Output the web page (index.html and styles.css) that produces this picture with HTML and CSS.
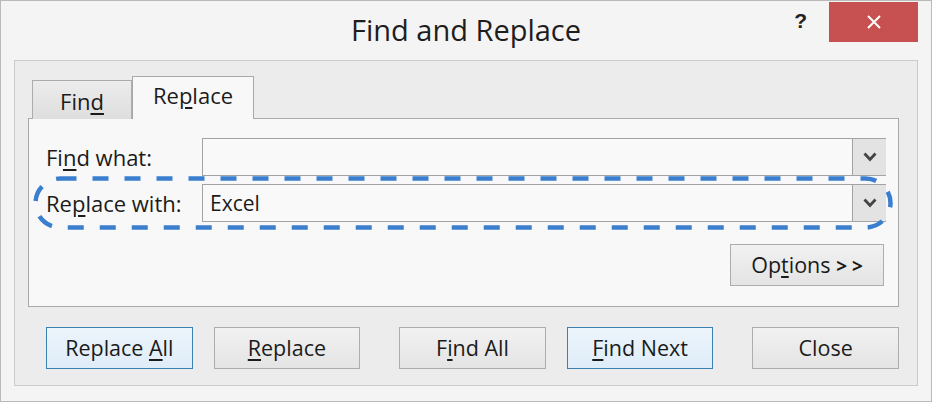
FILE: index.html
```html
<!DOCTYPE html>
<html lang="en">
<head>
<meta charset="utf-8">
<title>Find and Replace</title>
<link rel="stylesheet" href="styles.css">
</head>
<body>
<div class="window">
  <div class="titlebar">
    <div class="title">Find and Replace</div>
    <div class="help">?</div>
    <div class="close">
      <svg width="16" height="16" viewBox="0 0 16 16"><path d="M2 2 L14 14 M14 2 L2 14" stroke="#fff" stroke-width="2" fill="none"/></svg>
    </div>
  </div>
  <div class="panel">
    <div class="tabs">
      <div class="tab"><span>Fin<u>d</u></span></div>
      <div class="tab active"><span>Re<u>p</u>lace</span></div>
    </div>
    <div class="tabbox">
      <div class="row">
        <label class="label">Fi<u>n</u>d what:</label>
        <div class="combo">
          <div class="field"></div>
          <div class="drop"><svg width="14" height="10" viewBox="0 0 14 10"><path d="M1.5 1.5 L7 7.5 L12.5 1.5" stroke="#444" stroke-width="2.8" fill="none"/></svg></div>
        </div>
      </div>
      <div class="row">
        <label class="label">Re<u>p</u>lace with:</label>
        <div class="combo">
          <div class="field">Excel</div>
          <div class="drop"><svg width="14" height="10" viewBox="0 0 14 10"><path d="M1.5 1.5 L7 7.5 L12.5 1.5" stroke="#444" stroke-width="2.8" fill="none"/></svg></div>
        </div>
      </div>
      <div class="options-row">
        <div class="btn options"><span>Op<u>t</u>ions <b class="arrows">&gt; &gt;</b></span></div>
      </div>
      <svg class="highlight" width="860" height="54" viewBox="0 0 860 54"><rect x="2.5" y="2.5" width="855" height="49" rx="25" ry="25" fill="none" stroke="#3a7ecf" stroke-width="4.5" stroke-dasharray="16 16"/></svg>
    </div>
    <div class="buttons">
      <div class="btn default"><span>Replace <u>A</u>ll</span></div>
      <div class="btn"><span><u>R</u>eplace</span></div>
      <div class="btn spaced"><span>F<u>i</u>nd All</span></div>
      <div class="btn default"><span><u>F</u>ind Next</span></div>
      <div class="btn spaced"><span>Close</span></div>
    </div>
  </div>
</div>
</body>
</html>
```
FILE: styles.css
```css
* { box-sizing: border-box; }
html, body { margin: 0; padding: 0; }
body {
  width: 932px;
  height: 402px;
  overflow: hidden;
  background: #f4f4f4;
  font-family: "Open Sans", "Noto Sans", sans-serif;
  color: #1b1b1b;
}
u { text-decoration-thickness: 1.5px; text-underline-offset: 3px; }

.window {
  width: 932px;
  height: 402px;
  border: 1px solid #b9b9b9;
  background: #f4f4f4;
  display: flex;
  flex-direction: column;
}

.titlebar {
  height: 59px;
  position: relative;
}
.title {
  position: absolute;
  left: 0;
  right: 0;
  top: 9px;
  text-align: center;
  font-size: 29px;
  color: #1e1e1e;
  letter-spacing: 0;
}
.help {
  position: absolute;
  right: 124px;
  top: 8px;
  font-family: "Liberation Sans", sans-serif;
  font-weight: bold;
  font-size: 21px;
  color: #222;
}
.close {
  position: absolute;
  right: 13px;
  top: 1px;
  width: 89px;
  height: 40px;
  background: #c75050;
  display: flex;
  align-items: center;
  justify-content: center;
}

.panel {
  margin: 0 13px;
  height: 326px;
  border: 1px solid #cbcbcb;
  background: #ececec;
  padding: 15px 18px 0 13px;
  display: flex;
  flex-direction: column;
}

.tabs {
  display: flex;
  align-items: flex-end;
  padding-left: 4px;
  height: 43px;
  position: relative;
  z-index: 1;
  margin-bottom: -1px;
}
.tab {
  width: 100px;
  height: 39px;
  border: 1px solid #acacac;
  border-bottom: none;
  background: linear-gradient(#ececec, #dedede);
  font-size: 22px;
  display: flex;
  align-items: center;
  justify-content: center;
  padding-top: 2px;
}
.tab.active {
  width: 122px;
  height: 43px;
  background: #f8f8f8;
  border-color: #a9a9a9;
  padding-top: 0;
  padding-bottom: 6px;
}

.tabbox {
  position: relative;
  height: 189px;
  border: 1px solid #a9a9a9;
  background: #f8f8f8;
  padding: 19px 12px 0 17px;
  display: flex;
  flex-direction: column;
  gap: 8px;
}
.row {
  display: flex;
  align-items: center;
  height: 38px;
}
.label {
  width: 156px;
  font-size: 22px;
}
.combo {
  flex: 1;
  display: flex;
  height: 38px;
  border: 1px solid #a3a3a3;
  background: #f9f9f9;
}
.field {
  flex: 1;
  font-size: 21px;
  padding-left: 7px;
  display: flex;
  align-items: center;
}
.drop {
  width: 34px;
  margin: 0 -1px 0 0;
  border-left: 1px solid #a3a3a3;
  background: #e3e3e3;
  display: flex;
  align-items: center;
  justify-content: center;
}
.options-row {
  display: flex;
  justify-content: flex-end;
  padding-top: 14px;
  padding-right: 2px;
}
.arrows { font-size: 19px; font-weight: 700; }
.highlight {
  position: absolute;
  left: 4px;
  top: 57px;
}

.btn {
  width: 147px;
  height: 42px;
  border: 1px solid #adadad;
  background: linear-gradient(#f1f1f1, #e4e4e4);
  font-size: 21.5px;
  display: flex;
  align-items: center;
  justify-content: center;
  padding-bottom: 2px;
}
.btn.options { width: 154px; }
.btn.default {
  border-color: #3c7fb1;
  background: linear-gradient(#ecf4fb, #dfedf9);
}

.buttons {
  display: flex;
  gap: 21px;
  padding-left: 18px;
  margin-top: 20px;
}
.btn.spaced { margin-left: 18px; }
```
